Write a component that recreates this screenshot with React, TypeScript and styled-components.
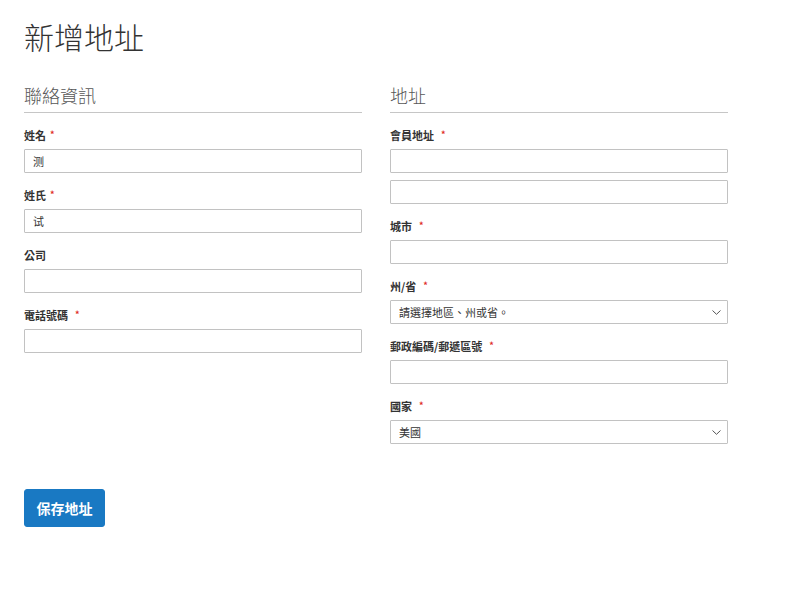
import React from "react";
import styled, { createGlobalStyle } from "styled-components";

const GlobalStyle = createGlobalStyle`
  html, body { margin: 0; padding: 0; background: #fff; }
  body {
    font-family: "Noto Sans CJK TC", "Noto Sans", "Liberation Sans", sans-serif;
    color: #333;
  }
  * { box-sizing: border-box; }
`;

const Page = styled.div`
  padding: 19px 24px 40px;
  width: 752px;
`;

const Title = styled.h1`
  margin: 0 0 33px;
  font-size: 30px;
  line-height: 34px;
  font-weight: 300;
  color: #333;
`;

const Columns = styled.div`
  display: grid;
  grid-template-columns: 338px 338px;
  column-gap: 28px;
  align-items: start;
`;

const Fieldset = styled.div`
  display: flex;
  flex-direction: column;
  gap: 16px;
`;

const Legend = styled.div`
  font-size: 18px;
  line-height: 18px;
  font-weight: 300;
  color: #575757;
  padding-bottom: 8px;
  border-bottom: 1px solid #c6c6c6;
`;

const Field = styled.div`
  display: flex;
  flex-direction: column;
  gap: 8px;
`;

const Label = styled.label`
  display: flex;
  align-items: center;
  height: 12px;
  font-size: 11px;
  line-height: 12px;
  font-weight: 700;
  color: #333;
`;

const Star = styled.span<{ $wide?: boolean }>`
  color: #e02b27;
  font-size: 9px;
  margin-left: ${(p) => (p.$wide ? "7px" : "4px")};
`;

const Controls = styled.div`
  display: flex;
  flex-direction: column;
  gap: 7px;
`;

const Input = styled.input`
  display: block;
  width: 100%;
  height: 24px;
  border: 1px solid #c2c2c2;
  border-radius: 1px;
  padding: 0 8px;
  font-family: inherit;
  font-size: 11px;
  color: #333;
  background: #fff;
  outline: none;
`;

const SelectWrap = styled.div`
  position: relative;
`;

const Select = styled.select`
  display: block;
  width: 100%;
  height: 24px;
  border: 1px solid #c2c2c2;
  border-radius: 1px;
  padding: 0 24px 0 8px;
  font-family: inherit;
  font-size: 11px;
  color: #333;
  background: #fff;
  appearance: none;
  -webkit-appearance: none;
  outline: none;
`;

const Chevron = styled.svg`
  position: absolute;
  right: 7px;
  top: 10px;
  width: 9px;
  height: 5px;
  pointer-events: none;
`;

const Actions = styled.div`
  padding-top: 45px;
`;

const Button = styled.button`
  height: 38px;
  padding: 0 11.5px;
  background: #1979c3;
  border: 1px solid #1979c3;
  border-radius: 3px;
  color: #fff;
  font-family: inherit;
  font-size: 14px;
  font-weight: 700;
  cursor: pointer;
`;

type FieldProps = {
  label: string;
  required?: boolean;
  wide?: boolean;
  children: React.ReactNode;
};

function FormField({ label, required, wide, children }: FieldProps) {
  return (
    <Field>
      <Label>
        {label}
        {required && <Star $wide={wide}>*</Star>}
      </Label>
      {children}
    </Field>
  );
}

function Dropdown({ value }: { value: string }) {
  return (
    <SelectWrap>
      <Select defaultValue={value}>
        <option value={value}>{value}</option>
      </Select>
      <Chevron viewBox="0 0 9 5">
        <path d="M0.5 0.5 L4.5 4.3 L8.5 0.5" fill="none" stroke="#555" strokeWidth="1" />
      </Chevron>
    </SelectWrap>
  );
}

export default function App() {
  return (
    <>
      <GlobalStyle />
      <Page>
        <Title>新增地址</Title>
        <Columns>
          <Fieldset>
            <Legend>聯絡資訊</Legend>
            <FormField label="姓名" required>
              <Input defaultValue="测" />
            </FormField>
            <FormField label="姓氏" required>
              <Input defaultValue="试" />
            </FormField>
            <FormField label="公司">
              <Input />
            </FormField>
            <FormField label="電話號碼" required wide>
              <Input />
            </FormField>
          </Fieldset>
          <Fieldset>
            <Legend>地址</Legend>
            <FormField label="會員地址" required wide>
              <Controls>
                <Input />
                <Input />
              </Controls>
            </FormField>
            <FormField label="城市" required wide>
              <Input />
            </FormField>
            <FormField label="州/省" required wide>
              <Dropdown value="請選擇地區、州或省。" />
            </FormField>
            <FormField label="郵政編碼/郵遞區號" required wide>
              <Input />
            </FormField>
            <FormField label="國家" required wide>
              <Dropdown value="美國" />
            </FormField>
          </Fieldset>
        </Columns>
        <Actions>
          <Button type="button">保存地址</Button>
        </Actions>
      </Page>
    </>
  );
}
